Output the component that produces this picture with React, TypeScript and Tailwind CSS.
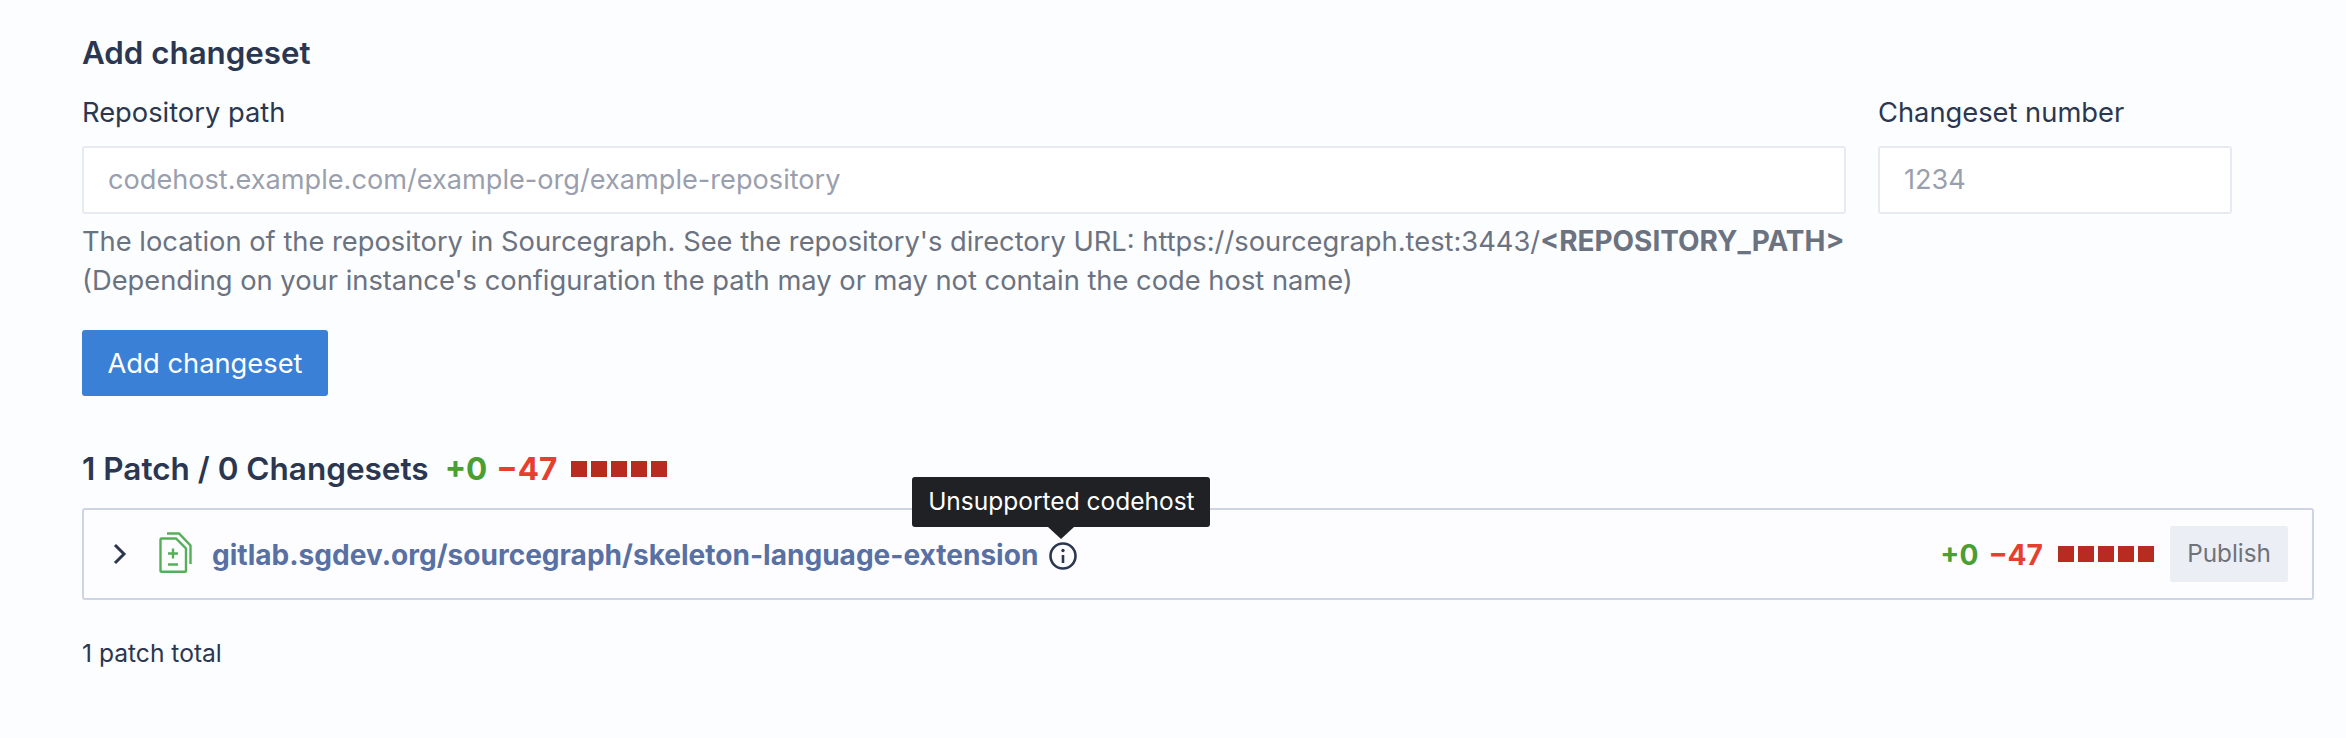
import React from "react";

function Bars() {
  return (
    <span className="flex gap-[4px]">
      {[0, 1, 2, 3, 4].map((i) => (
        <span key={i} className="block w-[16px] h-[16px] bg-[#b72b20]" />
      ))}
    </span>
  );
}

export default function App() {
  return (
    <div className="w-[2346px] h-[738px] bg-[#fcfdfe] font-['Inter',sans-serif] text-[#2b3750] pl-[82px] pt-[34px] overflow-hidden">
      <h3 className="text-[31.3px] leading-[38px] font-semibold">Add changeset</h3>
      <div className="flex gap-[32px] mt-[25px]">
        <div className="w-[1764px]">
          <label className="block text-[27.3px] leading-[32px]">Repository path</label>
          <div className="mt-[17px] h-[68px] border-2 border-[#e6ebf2] rounded-[3px] bg-white flex items-center pl-[24px] text-[27.15px] text-[#9a9fae]">
            codehost.example.com/example-org/example-repository
          </div>
          <p className="mt-[8px] text-[27.3px] leading-[39px] text-[#6b7280] whitespace-nowrap">
            The location of the repository in Sourcegraph. See the repository's directory URL: https://sourcegraph.test:3443/<b className="font-bold text-[27.95px]">&lt;REPOSITORY_PATH&gt;</b>
            <br />
            (Depending on your instance's configuration the path may or may not contain the code host name)
          </p>
        </div>
        <div className="w-[354px]">
          <label className="block text-[27.3px] leading-[32px]">Changeset number</label>
          <div className="mt-[17px] h-[68px] border-2 border-[#e6ebf2] rounded-[3px] bg-white flex items-center pl-[24px] text-[27.15px] text-[#9a9fae]">
            1234
          </div>
        </div>
      </div>
      <button className="mt-[30px] block w-[246px] h-[66px] rounded-[3px] bg-[#3a80d6] text-white text-[27.3px] pt-[2px]">
        Add changeset
      </button>
      <div className="mt-[51px] flex items-center h-[44px]">
        <h3 className="text-[31.5px] font-semibold">1 Patch / 0 Changesets</h3>
        <span className="ml-[16px] text-[31.5px] font-bold text-[#4a9e32]">+0</span>
        <span className="ml-[9px] text-[31.5px] font-bold text-[#e5402f]">−47</span>
        <span className="ml-[14px]"><Bars /></span>
      </div>
      <div className="mt-[17px] w-[2232px] h-[92px] border-2 border-[#cdd5e4] rounded-[3px] bg-[#fdfdff] flex items-center">
        <svg className="ml-[29px] w-[14px] h-[22px]" viewBox="0 0 14 22" fill="none" stroke="#2b3750" strokeWidth="3" strokeLinejoin="miter">
          <path d="M2 2l9 9-9 9" />
        </svg>
        <svg className="ml-[32px] mb-[3px] w-[33px] h-[41px]" viewBox="0 0 33 41" fill="none" stroke="#55ae58" strokeWidth="2.4">
          <path d="M8 1.500h12l11.500 12V32" />
          <path d="M1.500 7.500q0-1 1-1H17l10 10V38.500q0 1.300-1.300 1.300H2.800q-1.300 0-1.300-1.300z" />
          <path d="M14 16.500v10M9 21.500h10M9 32.500h10" />
        </svg>
        <span className="ml-[20px] mt-[3px] text-[28.05px] font-bold text-[#5870a3] whitespace-nowrap">gitlab.sgdev.org/sourcegraph/skeleton-language-extension</span>
        <span className="relative ml-[11px] mt-[3px] w-[28px] h-[28px] block">
          <svg className="w-[28px] h-[28px]" viewBox="0 0 28 28" fill="none" stroke="#2b3750" strokeWidth="2.600">
            <circle cx="14" cy="14" r="12.500" />
            <path d="M14 13v8" />
            <circle cx="14" cy="8.500" r="1.700" fill="#2b3750" stroke="none" />
          </svg>
          <span className="absolute left-[-137px] top-[-65px] w-[298px] h-[50px] bg-[#202125] rounded-[3px] text-white text-[24.5px] flex items-center justify-center whitespace-nowrap">
            Unsupported codehost
            <span className="absolute left-[136px] top-[50px] w-0 h-0 border-x-[13px] border-x-transparent border-t-[12px] border-t-[#202125]" />
          </span>
        </span>
        <span className="ml-auto mt-[3px] text-[28.2px] font-bold text-[#4a9e32]">+0</span>
        <span className="ml-[10px] mt-[3px] text-[28.2px] font-bold text-[#e5402f]">−47</span>
        <span className="ml-[15px]"><Bars /></span>
        <span className="ml-[16px] mr-[24px] w-[118px] h-[56px] bg-[#ebeef5] rounded-[2px] text-[#6f7379] text-[24.3px] flex items-center justify-center pb-[1px]">Publish</span>
      </div>
      <p className="mt-[38px] text-[24.6px] leading-[30px]">1 patch total</p>
    </div>
  );
}
